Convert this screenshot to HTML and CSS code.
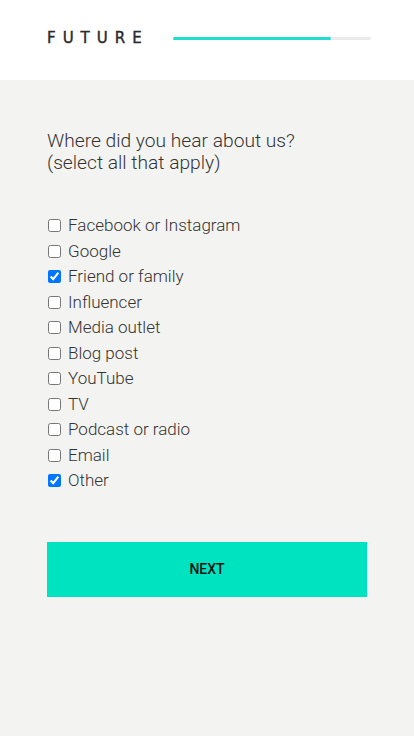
FILE: index.html
```html
<!DOCTYPE html>
<html lang="en">
<head>
  <meta charset="UTF-8">
  <meta name="viewport" content="width=device-width, initial-scale=1.0">
  <title>Future - Survey</title>
  <link rel="stylesheet" href="styles.css">
</head>
<body>

<header class="header">
  <div class="logo">FUTURE</div>
  <div class="progress">
    <div class="progress-fill" style="width: 80%"></div>
  </div>
</header>

<main class="content">
  <p class="question">Where did you hear about us?<br>(select all that apply)</p>

  <div class="options">
    <label class="option"><input type="checkbox"> Facebook or Instagram</label>
    <label class="option"><input type="checkbox"> Google</label>
    <label class="option"><input type="checkbox" checked> Friend or family</label>
    <label class="option"><input type="checkbox"> Influencer</label>
    <label class="option"><input type="checkbox"> Media outlet</label>
    <label class="option"><input type="checkbox"> Blog post</label>
    <label class="option"><input type="checkbox"> YouTube</label>
    <label class="option"><input type="checkbox"> TV</label>
    <label class="option"><input type="checkbox"> Podcast or radio</label>
    <label class="option"><input type="checkbox"> Email</label>
    <label class="option"><input type="checkbox" checked> Other</label>
  </div>

  <button class="next">NEXT</button>
</main>

</body>
</html>
```

FILE: styles.css
```css
body {
  margin: 0;
  font-family: Roboto, Arial, sans-serif;
  background-color: #f3f3f1;
  color: #333;
}
.header {
  height: 80px;
  background-color: #fff;
  display: flex;
  align-items: center;
  padding: 0 43px 4px 47px;
  box-sizing: border-box;
  gap: 24px;
}
.logo {
  font-family: "DejaVu Sans", Arial, sans-serif;
  font-size: 15px;
  letter-spacing: 7px;
  color: #2a2a2a;
  -webkit-text-stroke: 0.4px #2a2a2a;
}
.progress {
  flex: 1;
  height: 3px;
  background-color: #ebebeb;
  border-radius: 2px;
}
.progress-fill {
  height: 100%;
  background-color: #22dccf;
  border-radius: 2px;
}
.content {
  padding: 50px 47px 0 47px;
}
.question {
  margin: 0;
  font-size: 19.2px;
  font-weight: 300;
  line-height: 22px;
}
.options {
  display: flex;
  flex-direction: column;
  margin-top: 39px;
}
.option {
  font-size: 17px;
  font-weight: 300;
  line-height: 25.5px;
  display: flex;
  align-items: center;
}
.option input {
  margin: 0 7px 0 1px;
}
.next {
  width: 100%;
  height: 55px;
  margin-top: 48px;
  border: none;
  background-color: #00e3c0;
  color: #111;
  font-family: Roboto, Arial, sans-serif;
  font-size: 14px;
  font-weight: 500;
  cursor: pointer;
}
```
